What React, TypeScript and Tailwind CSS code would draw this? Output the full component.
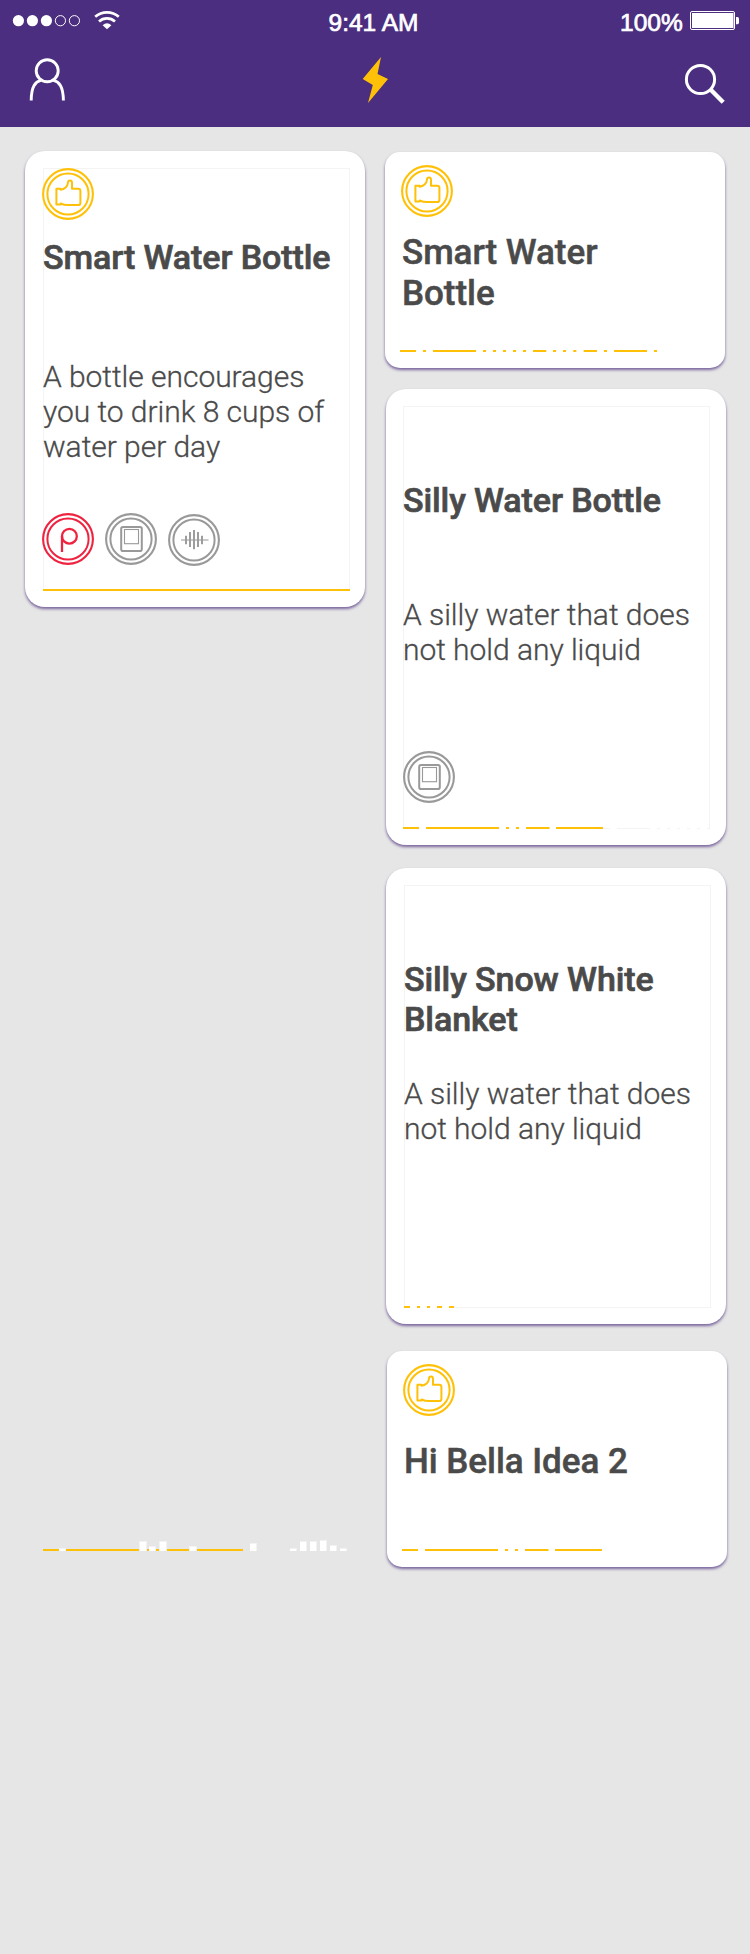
import type { ReactNode } from "react";

type IconKind = "thumb" | "pin" | "photo" | "audio";

const ringColor: Record<IconKind, string> = {
  thumb: "#ffc107",
  pin: "#ee2340",
  photo: "#999999",
  audio: "#999999",
};

function RoundIcon({ kind, className = "" }: { kind: IconKind; className?: string }) {
  const color = ringColor[kind];
  return (
    <svg width="52" height="52" viewBox="0 0 52 52" fill="none" stroke={color} className={`shrink-0 ${className}`}>
      <circle cx="26" cy="26" r="24.9" strokeWidth="2.1" />
      <circle cx="26" cy="26" r="20.6" strokeWidth="2" />
      {kind === "thumb" && (
        <path
          d="M14.4 20.8H18.6V21.8C22.5 21.4 25.6 18.5 25.9 15C26 13.3 26.8 12.6 28 12.6C29.4 12.6 30 13.6 30 15V20.8H36.2Q38.4 20.8 38.4 23V35Q38.4 37.1 36.2 37.1H26Q22 37.1 18.7 35.5V36.4H14.4Z"
          strokeWidth="2"
          strokeLinejoin="round"
        />
      )}
      {kind === "pin" && (
        <g strokeWidth="2.3">
          <circle cx="27.4" cy="23.2" r="7.4" />
          <path d="M20 39V23" />
        </g>
      )}
      {kind === "photo" && (
        <g>
          <rect x="16.2" y="13.9" width="20.6" height="24.2" rx="1.8" strokeWidth="2" />
          <rect x="19.5" y="16.5" width="14" height="14.2" strokeWidth="1.1" />
        </g>
      )}
      {kind === "audio" && (
        <g>
          <path d="M13 26H40.5" strokeWidth="1.3" strokeOpacity="0.8" />
          <path d="M18 21.7V30.3M22 18V33M26 16V35.3M30 18V33M34 21.7V30.3" strokeWidth="1.9" />
        </g>
      )}
    </svg>
  );
}

type Dash = [number, number];

const steadyDashes: Dash[] = [[0, 16], [23, 96], [103, 106], [113, 116], [123, 146.5], [153, 200]];
const busyDashes: Dash[] = [
  [0, 16], [23, 26], [33, 76], [83, 86], [93, 96], [103, 106], [113, 116], [123, 126],
  [133, 146.3], [153, 156], [163, 166], [173.3, 176.3], [183.7, 197], [204, 207], [214, 247], [254, 257],
];
const shortDashes: Dash[] = [[0, 6], [13, 16], [23, 26], [33, 38], [45, 50]];
const fullLine: Dash[] = [[0, 307]];

function Timeline({ dashes, clear = [] }: { dashes: Dash[]; clear?: Dash[] }) {
  return (
    <svg width="307" height="2" viewBox="0 0 307 2" className="block shrink-0">
      {clear.map(([a, b]) => (
        <rect key={a} x={a} y="0" width={b - a} height="2" fill="#ffffff" />
      ))}
      {dashes.map(([a, b]) => (
        <rect key={a} x={a} y="0" width={b - a} height="2" fill="#ffc107" />
      ))}
    </svg>
  );
}

const levels: [number, number, number][] = [
  [16, 7, 3], [96, 8, 10], [106, 7, 5], [116, 8, 10], [146, 8, 5], [207, 7, 8],
  [247, 7, 3], [257, 7, 10], [267, 7, 10], [277, 7, 11], [287, 7, 6], [297, 7, 3],
];

function LevelChart() {
  return (
    <svg width="307" height="12" viewBox="0 0 307 12" className="block">
      <rect x="0" y="10" width="200" height="2" fill="#ffc107" />
      {levels.map(([x, w, h]) => (
        <g key={x}>
          <rect x={x} y={12 - h} width={w} height={h} fill="#f2f2f2" />
          <rect x={x + (w === 8 ? 1 : 0)} y={13 - h} width={w === 8 ? 6 : w - 1} height={h - 1} fill="#ffffff" />
        </g>
      ))}
    </svg>
  );
}

function TallCard({ className, children }: { className: string; children: ReactNode }) {
  return (
    <article
      className={`h-[456px] w-[340px] shrink-0 rounded-[20px] bg-white pt-[17px] shadow-[0_2px_3px_rgba(75,46,127,0.7)] ${className}`}
    >
      <div className="flex h-[423px] w-[307px] flex-col shadow-[inset_0_0_0_1px_#f4f4f4]">{children}</div>
    </article>
  );
}

function ShortCard({ className, children }: { className: string; children: ReactNode }) {
  return (
    <article
      className={`flex h-[216px] w-[340px] shrink-0 flex-col rounded-[15px] bg-white pt-[13px] pb-4 shadow-[0_2px_3px_rgba(75,46,127,0.7)] ${className}`}
    >
      {children}
    </article>
  );
}

const titleTall =
  "h-[117px] shrink-0 whitespace-nowrap text-[34px] leading-[40px] font-medium tracking-[-0.1px] [-webkit-text-stroke:0.7px_#4a4a4a]";
const titleShort =
  "whitespace-nowrap text-[35px] leading-[41px] font-medium tracking-[-0.05px] [-webkit-text-stroke:0.5px_#4a4a4a]";
const bodyText =
  "h-[154px] shrink-0 whitespace-nowrap text-[30px] leading-[35px] font-light tracking-[-0.04px] [-webkit-text-stroke:0.3px_#4a4a4a]";

export default function App() {
  return (
    <div className="h-[1954px] w-[750px] overflow-hidden bg-[#e6e6e6] font-['Roboto',sans-serif] text-[#4a4a4a]">
      <header className="flex h-[127px] flex-col bg-[#4b2e7f] text-white">
        <div className="grid h-[44px] grid-cols-[250px_250px_250px] items-start font-['Liberation_Sans',sans-serif] text-[24.5px] leading-[28px] [-webkit-text-stroke:0.7px_white]">
          <svg width="130" height="44" viewBox="0 0 130 44" fill="white">
            <circle cx="18.4" cy="20.7" r="5.6" />
            <circle cx="32.4" cy="20.7" r="5.6" />
            <circle cx="46.4" cy="20.7" r="5.6" />
            <g fill="none" stroke="white" strokeWidth="1">
              <circle cx="60.4" cy="20.7" r="5.1" />
              <circle cx="74.4" cy="20.7" r="5.1" />
            </g>
            <g fill="none" stroke="white" strokeWidth="2.7">
              <path d="M95.2 16.7Q100.3 12.3 107 12.3T118.8 16.7" />
              <path d="M99 21.4Q102.4 18.3 107 18.3T115 21.4" />
            </g>
            <path d="M102.6 25.2Q107 21.5 111.4 25.2L107 29.2Z" />
          </svg>
          <div className="pt-[9px] pl-[78.5px] whitespace-nowrap">9:41 AM</div>
          <div className="flex items-start">
            <span className="w-[190px] pt-[9px] pl-[120px] whitespace-nowrap">100%</span>
            <svg width="50" height="44" viewBox="0 0 50 44">
              <rect x="0.5" y="11.5" width="44" height="18" rx="1.5" fill="none" stroke="white" />
              <rect x="2" y="13" width="41.5" height="15" fill="white" />
              <path d="M46 17H47.5Q49 17 49 19V22.5Q49 24.3 47.5 24.3H46Z" fill="white" />
            </svg>
          </div>
        </div>
        <nav className="flex h-[83px] justify-between">
          <svg width="80" height="83" viewBox="0 44 80 83" fill="none" stroke="white" strokeWidth="2.9">
            <circle cx="47.2" cy="70.8" r="11" />
            <path d="M31.2 100.4C31.4 86.5 35 82 41.3 80.2M63.4 100.4C63.2 86.5 59.4 82 53.1 80.2" />
          </svg>
          <svg width="80" height="83" viewBox="335 44 80 83">
            <path d="M381 57L362.7 79L372.8 85L368 103L388 79L377.5 74Z" fill="#ffc107" />
          </svg>
          <svg width="80" height="83" viewBox="670 44 80 83" fill="none" stroke="white">
            <circle cx="700.5" cy="79.5" r="14.1" strokeWidth="3" />
            <path d="M710.5 89.5L723.2 102.2" strokeWidth="4.4" />
          </svg>
        </nav>
      </header>

      <main className="flex">
        <section className="flex w-[385px] flex-col pt-6 pl-[25px]">
          <TallCard className="pl-[18px]">
            <RoundIcon kind="thumb" className="-ml-px" />
            <h2 className={`mt-[17px] ${titleTall}`}>Smart Water Bottle</h2>
            <p className={`mt-[5px] ${bodyText}`}>
              A bottle encourages
              <br />
              you to drink 8 cups of
              <br />
              water per day
            </p>
            <div className="-ml-px flex gap-[11px]">
              <RoundIcon kind="pin" />
              <RoundIcon kind="photo" />
              <RoundIcon kind="audio" className="mt-px" />
            </div>
            <div className="mt-auto">
              <Timeline dashes={fullLine} />
            </div>
          </TallCard>
          <div className="mt-[932px] pl-[18px]">
            <LevelChart />
          </div>
        </section>

        <section className="flex w-[365px] flex-col pt-[25px]">
          <ShortCard className="pl-[15px]">
            <RoundIcon kind="thumb" className="ml-px" />
            <h2 className={`mt-[15px] pl-[2px] ${titleShort}`}>
              Smart Water
              <br />
              Bottle
            </h2>
            <div className="mt-auto">
              <Timeline dashes={busyDashes} />
            </div>
          </ShortCard>

          <TallCard className="mt-[21px] ml-px pl-[17px]">
            <h2 className={`mt-[74px] ${titleTall}`}>Silly Water Bottle</h2>
            <p className={bodyText}>
              A silly water that does
              <br />
              not hold any liquid
            </p>
            <RoundIcon kind="photo" />
            <div className="mt-auto">
              <Timeline
                dashes={steadyDashes}
                clear={[[16, 23], [96, 103], [106, 113], [116, 123], [146, 153], [207, 214], [247, 254], [257, 264], [267, 274], [277, 284], [287, 294], [297, 304]]}
              />
            </div>
          </TallCard>

          <TallCard className="mt-[23px] ml-px pl-[18px]">
            <h2 className={`mt-[74px] ${titleTall}`}>
              Silly Snow White
              <br />
              Blanket
            </h2>
            <p className={bodyText}>
              A silly water that does
              <br />
              not hold any liquid
            </p>
            <div className="mt-auto">
              <Timeline dashes={shortDashes} clear={[[6, 13], [16, 23], [26, 33], [38, 45]]} />
            </div>
          </TallCard>

          <ShortCard className="mt-[27px] ml-[2px] pl-[15px]">
            <RoundIcon kind="thumb" className="ml-px" />
            <h2 className={`mt-[25px] pl-[2px] ${titleShort}`}>Hi Bella Idea 2</h2>
            <div className="mt-auto">
              <Timeline dashes={steadyDashes} />
            </div>
          </ShortCard>
        </section>
      </main>
    </div>
  );
}
